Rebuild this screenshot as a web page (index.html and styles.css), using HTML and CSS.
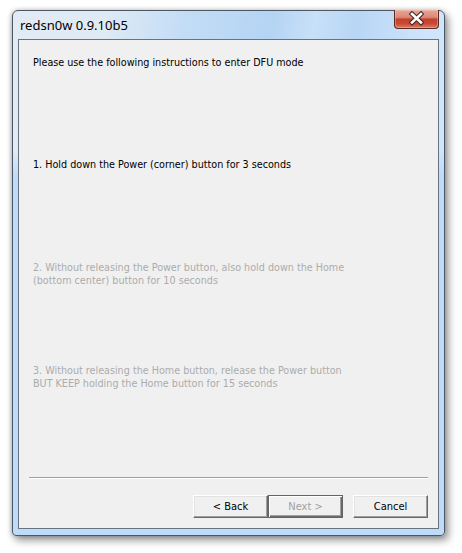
FILE: index.html
```html
<!DOCTYPE html>
<html>
<head>
<meta charset="utf-8">
<title>redsn0w</title>
<link rel="stylesheet" href="styles.css">
</head>
<body>
<div class="window">
  <div class="titlebar">
    <span class="title">redsn0w 0.9.10b5</span>
    <div class="close">
      <svg width="45" height="19" viewBox="0 0 45 19">
        <path d="M18 5 L27 13.5 M27 5 L18 13.5" stroke="#3b2a28" stroke-width="4.6" stroke-linecap="square" fill="none"/>
        <path d="M18 5 L27 13.5 M27 5 L18 13.5" stroke="#ffffff" stroke-width="2.6" stroke-linecap="square" fill="none"/>
      </svg>
    </div>
  </div>
  <div class="client">
    <p class="line intro">Please use the following instructions to enter DFU mode</p>
    <p class="line step1">1. Hold down the Power (corner) button for 3 seconds</p>
    <p class="line step2 dim">2. Without releasing the Power button, also hold down the Home<br>(bottom center) button for 10 seconds</p>
    <p class="line step3 dim">3. Without releasing the Home button, release the Power button<br>BUT KEEP holding the Home button for 15 seconds</p>
    <div class="spacer"></div>
    <div class="sep"></div>
    <div class="buttons">
      <div class="btn">&lt; Back</div>
      <div class="btn default disabled">Next &gt;</div>
      <div class="btn cancel">Cancel</div>
    </div>
  </div>
</div>
</body>
</html>
```
FILE: styles.css
```css
html, body {
  margin: 0;
  padding: 0;
  background: #ffffff;
}
body {
  width: 462px;
  height: 553px;
  overflow: hidden;
  padding: 10px 0 0 12px;
  box-sizing: border-box;
}
.window {
  width: 433px;
  height: 526px;
  box-sizing: border-box;
  border: 1px solid #4c5866;
  border-radius: 6px 6px 4px 4px;
  background:
    linear-gradient(to bottom, rgba(190,220,250,0) 0, rgba(190,220,250,0) 140px, #bddcfa 165px, #bddcfa 100%),
    linear-gradient(100deg, #e2ebf4 0%, #dfeaf5 18%, #c2dcf5 34%, #b4d4f4 50%, #c8e0f8 58%, #b8d6f5 66%, #cfe5fb 80%, #cfe5fb 100%);
  box-shadow: 3px 4px 9px rgba(0,0,0,0.45), -1px 0 4px rgba(0,0,0,0.2);
  padding: 0 5px 6px 5px;
  display: flex;
  flex-direction: column;
}
.titlebar {
  height: 28px;
  display: flex;
  justify-content: space-between;
  align-items: flex-start;
  flex: none;
}
.title {
  font-family: "Noto Sans", "DejaVu Sans", sans-serif;
  font-size: 13px;
  color: #000;
  margin: 6px 0 0 2px;
  line-height: 17px;
}
.close {
  width: 45px;
  height: 19px;
  margin-right: 0;
  margin-top: -1px;
  box-sizing: border-box;
  border: 1px solid #5a2a22;
  border-top: none;
  border-radius: 0 0 4px 4px;
  background: linear-gradient(to bottom, #e9a596 0%, #dc8a78 40%, #c4402c 52%, #c84a34 75%, #dc7a62 100%);
  box-shadow: inset 0 0 0 1px rgba(255,220,210,0.35);
  overflow: hidden;
}
.close svg { display: block; margin: -1px 0 0 -1px; }
.client {
  flex: 1;
  border: 1px solid #69737e;
  background: #f0f0f0;
  display: flex;
  flex-direction: column;
  padding: 0 9px 10px 10px;
  font-family: "DejaVu Sans Condensed", "DejaVu Sans", sans-serif;
  font-size: 10.7px;
  color: #000;
}
.line {
  margin: 0;
  padding-left: 4px;
  line-height: 13px;
}
.intro { margin-top: 16px; }
.step1 { margin-top: 89px; }
.step2 { margin-top: 90px; }
.step3 { margin-top: 77px; }
.dim { color: #acacac; }
.spacer { flex: 1; }
.sep {
  height: 0;
  border-top: 1px solid #a0a0a0;
  border-bottom: 1px solid #ffffff;
  margin-right: 1px;
}
.buttons {
  display: flex;
  justify-content: flex-end;
  margin-top: 16px;
  margin-right: 1px;
}
.btn {
  width: 75px;
  height: 23px;
  box-sizing: border-box;
  border: 1px solid;
  border-color: #ffffff #696969 #696969 #ffffff;
  box-shadow: inset -1px -1px 0 #a0a0a0, inset 1px 1px 0 #e3e3e3;
  background: #f0f0f0;
  display: flex;
  align-items: center;
  justify-content: center;
  font-size: 11px;
  color: #000;
}
.btn.default {
  border: 1px solid #646464;
  box-shadow: inset 1px 1px 0 #ffffff, inset -1px -1px 0 #696969, inset -2px -2px 0 #a0a0a0;
}
.btn.disabled { color: #a0a0a0; }
.btn.cancel { margin-left: 10px; }
```
